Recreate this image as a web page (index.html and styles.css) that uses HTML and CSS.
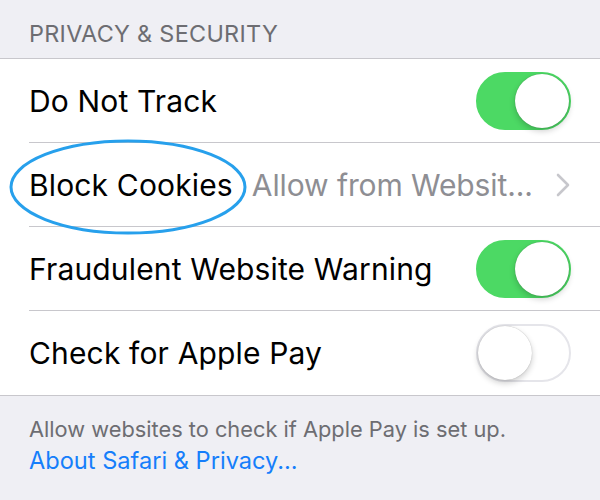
FILE: index.html
```html
<!DOCTYPE html>
<html lang="en">

<head>
    <meta charset="UTF-8">
    <meta name="viewport" content="width=device-width, initial-scale=1.0">
    <title>Privacy &amp; Security</title>
    <link rel="stylesheet" href="styles.css">
</head>

<body>
    <div class="section-header">PRIVACY &amp; SECURITY</div>
    <div class="group">
        <div class="row">
            <div class="row-inner">
                <span class="label">Do Not Track</span>
                <div class="switch on"><div class="knob"></div></div>
            </div>
        </div>
        <div class="row highlighted">
            <div class="row-inner">
                <span class="label">Block Cookies</span>
                <span class="detail">Allow from Websit...</span>
                <svg class="chevron" width="16" height="26" viewBox="0 0 16 26">
                    <path d="M3 3 L13 13 L3 23" fill="none" stroke="#c7c7cc" stroke-width="2.6" stroke-linecap="round" stroke-linejoin="round" />
                </svg>
            </div>
            <!-- hand-drawn circle around the label -->
            <svg class="marker" width="250" height="100" viewBox="0 0 250 100">
                <ellipse cx="125" cy="49" rx="117" ry="46" fill="none" stroke="#27a0ec" stroke-width="3" />
            </svg>
        </div>
        <div class="row">
            <div class="row-inner">
                <span class="label">Fraudulent Website Warning</span>
                <div class="switch on"><div class="knob"></div></div>
            </div>
        </div>
        <div class="row last">
            <div class="row-inner">
                <span class="label">Check for Apple Pay</span>
                <div class="switch"><div class="knob"></div></div>
            </div>
        </div>
    </div>
    <div class="section-footer">
        <p>Allow websites to check if Apple Pay is set up.</p>
        <a href="#">About Safari &amp; Privacy...</a>
    </div>
</body>

</html>
```

FILE: styles.css
```css
body {
    font-family: Inter, "Noto Sans", sans-serif;
    background-color: #efeff4;
    margin: 0;
    padding: 0;
    width: 600px;
    height: 500px;
    overflow: hidden;
}

.section-header {
    height: 59px;
    box-sizing: border-box;
    padding: 19px 29px 0;
    font-size: 23.4px;
    letter-spacing: 0.3px;
    color: #6d6d72;
    border-bottom: 1px solid #c8c7cc;
}

.group {
    background-color: #fff;
    border-bottom: 1px solid #c8c7cc;
}

.row {
    position: relative;
    padding-left: 29px;
}

.row-inner {
    display: flex;
    align-items: center;
    height: 83px;
    padding-right: 29px;
    border-bottom: 1px solid #c8c7cc;
}

.row.last .row-inner {
    border-bottom: none;
    height: 84px;
}

.label {
    font-size: 30px;
    letter-spacing: 0.15px;
    color: #000;
    flex: 1;
    white-space: nowrap;
}

.highlighted .label {
    flex: 0 0 auto;
}

.detail {
    flex: 1;
    margin-left: 19px;
    font-size: 30px;
    letter-spacing: -0.1px;
    color: #8e8e93;
    white-space: nowrap;
}

.marker {
    position: absolute;
    left: 3px;
    top: -5px;
    pointer-events: none;
}

.switch {
    position: relative;
    width: 95px;
    height: 58px;
    box-sizing: border-box;
    border-radius: 29px;
    border: 2px solid #e5e5ea;
    background-color: #fff;
    flex: 0 0 auto;
}

.switch.on {
    background-color: #4cd964;
    border-color: #4cd964;
}

.knob {
    position: absolute;
    top: 0;
    left: 0;
    width: 54px;
    height: 54px;
    border-radius: 50%;
    background-color: #fff;
    box-shadow: 0 3px 6px rgba(0, 0, 0, 0.2), 0 0 1px rgba(0, 0, 0, 0.3);
}

.switch.on .knob {
    left: auto;
    right: 0;
}

.section-footer {
    padding: 18px 29px 0;
    font-size: 21.8px;
    line-height: 31px;
}

.section-footer p {
    margin: 0;
    color: #6d6d72;
}

.section-footer a {
    font-size: 23.6px;
    color: #157efb;
    text-decoration: none;
}
```
